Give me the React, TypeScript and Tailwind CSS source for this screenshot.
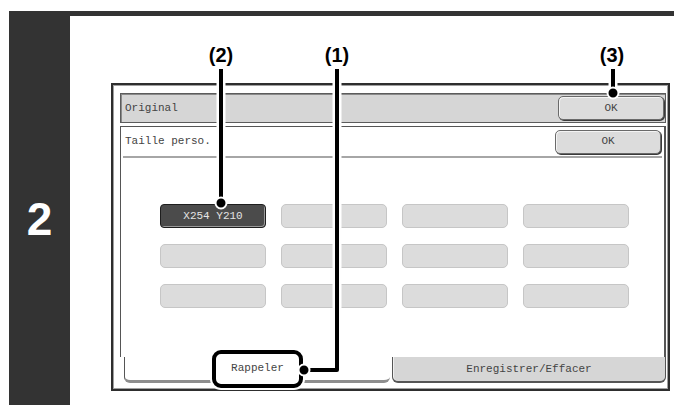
const TILES = ['X254 Y210', '', '', '', '', '', '', '', '', '', '', ''];

function OkButton() {
  return (
    <button
      type="button"
      className="flex h-[24px] w-[106px] items-center justify-center rounded-[5px] border border-[#6a6a6a] bg-[#dcdcdc] text-[11px] text-[#444] shadow-[1px_1px_0_#3a3a3a,inset_1px_1px_0_#f4f4f4]"
    >
      OK
    </button>
  );
}

function Callout({ x, label }: { x: number; label: string }) {
  return (
    <div
      className="absolute top-[44px] -translate-x-1/2 scale-x-95 text-[21px] font-bold leading-none text-black"
      style={{ left: x }}
    >
      {label}
    </div>
  );
}

export default function App() {
  return (
    <div className="relative h-[405px] w-[674px] overflow-hidden bg-white [font-family:'Liberation_Sans',Arial,sans-serif]">
      <div className="flex h-full pl-[9px] pt-[11px]">
        {/* step number column */}
        <div className="flex w-[61px] shrink-0 justify-center bg-[#333] pt-[185px]">
          <span className="text-[46px] font-bold leading-none text-white">2</span>
        </div>

        <div className="flex flex-1 flex-col">
          <div className="h-[5px] bg-[#333]" />

          <div className="pl-[41px] pt-[67px]">
            {/* dialog frame */}
            <div className="flex h-[308px] w-[559px] flex-col border-2 border-[#2e2e2e] bg-white pb-[6px] pl-[7px] pr-[2px] pt-[8px] shadow-[inset_0_0_0_1px_#a0a0a0] [font-family:'Liberation_Mono','Courier_New',monospace]">
              <div className="flex h-[30px] items-center justify-between border border-[#5c5c5c] bg-[#d6d6d6] pl-[4px] pr-[1px] shadow-[inset_1px_1px_0_#8a8a8a]">
                <span className="text-[11px] text-[#444]">Original</span>
                <OkButton />
              </div>

              <div className="mt-[3px] flex flex-1 flex-col">
                <div className="flex flex-1 flex-col border-l border-r-2 border-t border-[#555] bg-white">
                  <div className="mx-[2px] flex h-[31px] items-center justify-between border-b-2 border-double border-[#a6a6a6] pl-[2px] pr-[1px]">
                    <span className="text-[11px] text-[#444]">Taille perso.</span>
                    <OkButton />
                  </div>

                  <div className="grid grid-cols-[repeat(4,106px)] gap-x-[15px] gap-y-[16px] pl-[39px] pt-[46px]">
                    {TILES.map((t, i) =>
                      t ? (
                        <div
                          key={i}
                          className="flex h-[24px] items-center justify-center rounded-[4px] border border-[#1e1e1e] bg-[#4b4b4b] text-[11px] text-[#e4e4e4] shadow-[inset_-1px_-1px_0_#9a9a9a]"
                        >
                          {t}
                        </div>
                      ) : (
                        <div key={i} className="h-[24px] rounded-[5px] border border-[#c6c6c6] bg-[#dcdcdc]" />
                      )
                    )}
                  </div>
                </div>

                {/* tabs */}
                <div className="flex h-[26px] gap-[2px]">
                  <div className="ml-[4px] flex w-[266px] items-center justify-center rounded-b-[6px] border-b-[3px] border-l border-[#555] border-b-[#8e8e8e] bg-white">
                    <div className="flex h-[38px] w-[91px] shrink-0 items-center justify-center rounded-[9px] border-[4px] border-black bg-white text-[11px] text-[#444] shadow-[0_0_0_2px_white]">
                      Rappeler
                    </div>
                  </div>
                  <div className="flex flex-1 items-center justify-center rounded-b-[6px] border-x border-b-2 border-[#555] bg-[#d6d6d6] text-[11px] text-[#444] shadow-[inset_1px_0_0_#f0f0f0]">
                    Enregistrer/Effacer
                  </div>
                </div>
              </div>
            </div>
          </div>
        </div>
      </div>

      {/* callout labels and leader lines */}
      <Callout x={221} label="(2)" />
      <Callout x={337} label="(1)" />
      <Callout x={612} label="(3)" />
      <svg className="pointer-events-none absolute inset-0" width="674" height="405">
        <g fill="none" stroke="white" strokeWidth="9" strokeLinejoin="round">
          <path d="M221 78V203" />
          <path d="M337 78V370H304" />
          <path d="M613 78V93" />
        </g>
        <g fill="none" stroke="black" strokeWidth="4" strokeLinejoin="round">
          <path d="M221 69V203" />
          <path d="M337 69V370H304" />
          <path d="M613 69V93" />
        </g>
        <g fill="black" stroke="white" strokeWidth="2">
          <circle cx="221" cy="203" r="5.5" />
          <circle cx="304" cy="370" r="5.5" />
          <circle cx="613" cy="93" r="5.5" />
        </g>
      </svg>
    </div>
  );
}
